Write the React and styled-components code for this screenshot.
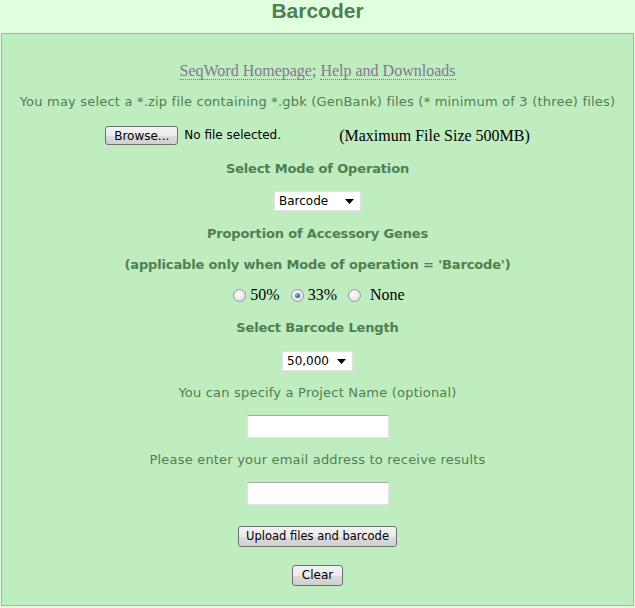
import React, { useState } from "react";
import styled, { createGlobalStyle } from "styled-components";

const GlobalStyle = createGlobalStyle`
  body {
    margin: 0;
    background: #dfffdf;
    font-family: "DejaVu Sans", Verdana, sans-serif;
  }
`;

const Title = styled.h1`
  margin: 0 0 11px 0;
  height: 22px;
  line-height: 22px;
  text-align: center;
  font-family: "Liberation Sans", Arial, sans-serif;
  font-size: 21px;
  font-weight: bold;
  color: #4e8050;
`;

const Panel = styled.div`
  margin: 0 1px;
  border: 1px solid #92c492;
  background: #c0edc0;
  padding: 27px 0 19px 0;
  display: flex;
  flex-direction: column;
  align-items: center;
`;

const Line = styled.div`
  margin-top: ${(p) => p.$gap || 0}px;
  height: ${(p) => p.$h || 20}px;
  line-height: ${(p) => p.$h || 20}px;
  font-size: 13px;
  color: #4f7f4f;
  font-weight: ${(p) => (p.$bold ? "bold" : "normal")};
  letter-spacing: ${(p) => (p.$bold ? "-0.15px" : "0.2px")};
  white-space: nowrap;
  display: flex;
  align-items: center;
  justify-content: center;
`;

const Links = styled(Line)`
  font-family: "Liberation Serif", "Times New Roman", serif;
  font-size: 16px;
  letter-spacing: 0;
  color: #7c6a86;
`;

const Link = styled.a`
  color: #857690;
  text-decoration: none;
  border-bottom: 1px dotted #857690;
  line-height: 17px;
`;

const FileBox = styled.div`
  width: 234px;
  display: flex;
  align-items: center;
  gap: 6px;
  letter-spacing: 0;
`;

const Button = styled.button`
  height: ${(p) => p.$h || 21}px;
  padding: 0 ${(p) => p.$px || 8}px;
  border: 1px solid #707070;
  border-radius: 3px;
  background: linear-gradient(#f2f2f2 0%, #ebebeb 50%, #dddddd 51%, #cfcfcf 100%);
  font-family: "DejaVu Sans", Verdana, sans-serif;
  font-size: ${(p) => p.$fs || 12}px;
  letter-spacing: 0;
  color: #000;
`;

const NoFile = styled.span`
  font-size: 12px;
  color: #000;
`;

const MaxSize = styled.span`
  font-family: "Liberation Serif", "Times New Roman", serif;
  font-size: 16px;
  letter-spacing: 0;
  color: #000;
`;

const SelectBox = styled.div`
  position: relative;
  width: ${(p) => p.$w}px;
  height: 20px;
  box-sizing: border-box;
  border: 1px solid #e2e2e2;
  background: #fff;
  font-size: 12px;
  letter-spacing: 0;
  color: #000;
  line-height: 18px;
  padding-left: 4px;
  text-align: left;
`;

const Arrow = styled.svg`
  position: absolute;
  right: 6px;
  top: 7px;
`;

const RadioRow = styled(Line)`
  font-family: "Liberation Serif", "Times New Roman", serif;
  font-size: 16px;
  letter-spacing: 0;
  color: #000;
`;

const RadioLabel = styled.label`
  display: flex;
  align-items: center;
  margin-right: ${(p) => p.$mr || 0}px;
`;

const RadioDot = styled.span`
  width: 11px;
  height: 11px;
  border-radius: 50%;
  border: 1px solid #9a9a9a;
  background: radial-gradient(circle at 40% 40%, #ffffff 0%, #e6e6e6 60%, #cfcfcf 100%);
  margin: 0 ${(p) => p.$mr || 4}px 0 3px;
  display: flex;
  align-items: center;
  justify-content: center;
  &::after {
    content: "";
    display: ${(p) => (p.$on ? "block" : "none")};
    width: 5px;
    height: 5px;
    border-radius: 50%;
    background: radial-gradient(circle at 35% 35%, #7fc3f2 0%, #1f6fb0 60%, #0d3f6e 100%);
  }
`;

const TextBox = styled.input`
  width: 142px;
  height: 23px;
  box-sizing: border-box;
  border: 1px solid #e2e2e2;
  border-top-color: #a8a8a8;
  background: #fff;
  outline: none;
`;

const Select = ({ w, value }) => (
  <SelectBox $w={w}>
    {value}
    <Arrow width="9" height="5" viewBox="0 0 9 5">
      <path d="M0 0 H9 L4.5 5 Z" fill="#000" />
    </Arrow>
  </SelectBox>
);

const options = [
  ["50", "50%", 8, 4],
  ["33", "33%", 8, 4],
  ["none", "None", 0, 9],
];

export default function App() {
  const [prop, setProp] = useState("33");
  return (
    <>
      <GlobalStyle />
      <Title>Barcoder</Title>
      <Panel>
        <Links>
          <Link href="#">SeqWord Homepage</Link>;&nbsp;<Link href="#">Help and Downloads</Link>
        </Links>
        <Line $gap={11}>
          You may select a *.zip file containing *.gbk (GenBank) files (* minimum of 3 (three) files)
        </Line>
        <Line $gap={13} $h={21}>
          <FileBox>
            <Button $h={19}>Browse...</Button>
            <NoFile>No file selected.</NoFile>
          </FileBox>
          <MaxSize>(Maximum File Size 500MB)</MaxSize>
        </Line>
        <Line $gap={13} $bold>Select Mode of Operation</Line>
        <Line $gap={12}>
          <Select w={87} value="Barcode" />
        </Line>
        <Line $gap={13} $bold>Proportion of Accessory Genes</Line>
        <Line $gap={11} $bold>(applicable only when Mode of operation = 'Barcode')</Line>
        <RadioRow $gap={10}>
          {options.map(([k, label, mr, dotMr]) => (
            <RadioLabel key={k} $mr={mr} onClick={() => setProp(k)}>
              <RadioDot $on={prop === k} $mr={dotMr} />
              {label}
            </RadioLabel>
          ))}
        </RadioRow>
        <Line $gap={13} $bold>Select Barcode Length</Line>
        <Line $gap={13}>
          <Select w={71} value="50,000" />
        </Line>
        <Line $gap={12}>You can specify a Project Name (optional)</Line>
        <Line $gap={11} $h={24}>
          <TextBox type="text" />
        </Line>
        <Line $gap={12}>Please enter your email address to receive results</Line>
        <Line $gap={11} $h={24}>
          <TextBox type="text" />
        </Line>
        <Line $gap={20} $h={22}>
          <Button $h={21} $fs={11.5} $px={7}>Upload files and barcode</Button>
        </Line>
        <Line $gap={17} $h={22}>
          <Button $h={21} $px={9}>Clear</Button>
        </Line>
      </Panel>
    </>
  );
}
